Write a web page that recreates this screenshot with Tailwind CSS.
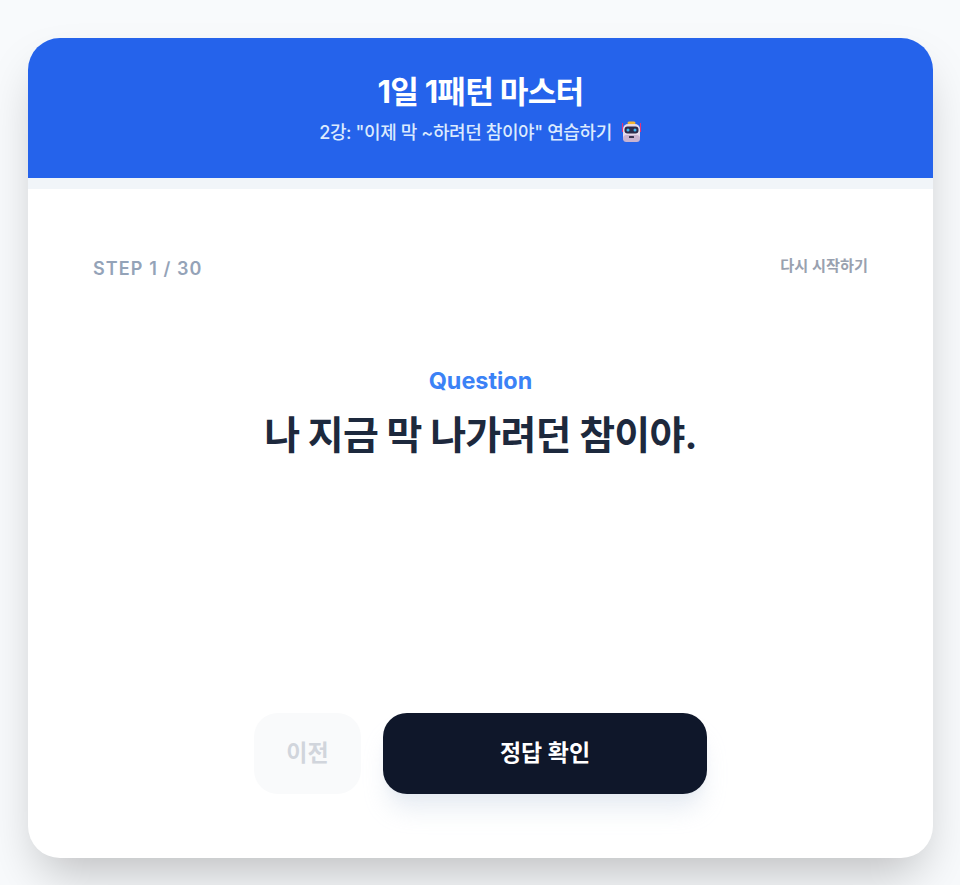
<!DOCTYPE html>
<html lang="ko">
<head>
    <meta charset="UTF-8">
    <meta name="viewport" content="width=device-width, initial-scale=1.0">
    <title>1일 1패턴 마스터</title>
    <script src="https://cdn.jsdelivr.net/npm/@tailwindcss/browser@4"></script>
</head>
<body class="bg-[#f8fafc] h-[885px] overflow-hidden font-['Inter','Noto_Sans_CJK_KR',sans-serif]">
    <div class="pt-[38px] pl-[28px]">
        <!-- Card -->
        <div class="w-[905px] h-[820px] bg-white rounded-[32px] shadow-2xl overflow-hidden flex flex-col">
            <!-- Header -->
            <header class="h-[140px] bg-[#2563eb] text-center pt-[32px]">
                <h1 class="text-[31.2px] leading-[44px] font-bold text-white tracking-tight">1일 1패턴 마스터</h1>
                <p class="text-[18px] leading-[28px] mt-[5px] font-medium text-[#dbeafe] tracking-[-0.4px] flex justify-center items-center gap-[9px]">
                    <span>2강: "이제 막 ~하려던 참이야" 연습하기</span>
                    <!-- robot emoji -->
                    <svg class="w-[21px] h-[22px] -mt-[2px]" viewBox="0 0 21 22">
                        <path d="M1.5 2v9M19.5 2v9" stroke="#e0357a" stroke-width="1.1"/>
                        <rect x="6.5" y="0.5" width="8" height="3" rx="1.5" fill="#f2b632"/>
                        <rect x="2" y="3" width="17" height="18" rx="5" fill="#e6daea"/>
                        <rect x="2" y="14" width="17" height="7" rx="3.5" fill="#c9b3d0"/>
                        <rect x="3.5" y="5.5" width="14" height="7" rx="3" fill="#2b2a4a"/>
                        <circle cx="7" cy="9" r="1.5" fill="#3fb8f0"/>
                        <circle cx="14" cy="9" r="1.5" fill="#3fb8f0"/>
                        <rect x="8" y="15" width="5" height="2" rx="0.5" fill="#3a3350"/>
                    </svg>
                </p>
            </header>
            <!-- Progress track -->
            <div class="h-[11px] bg-[#f1f5f9]"></div>
            <!-- Body -->
            <main class="flex-1 px-[65px] pt-[64px] pb-[64px] flex flex-col">
                <div class="flex justify-between items-center h-[28px]">
                    <span class="text-[18px] font-semibold tracking-[1.1px] text-[#94a3b8] mt-[2px]">STEP 1 / 30</span>
                    <button class="text-[15.2px] font-semibold text-gray-400 -mt-[1px]">다시 시작하기</button>
                </div>
                <div class="flex-1 text-center pt-[84px]">
                    <p class="text-[23.4px] leading-[32px] font-bold text-[#3b82f6]">Question</p>
                    <h2 class="text-[39px] leading-[56px] font-bold text-slate-800 tracking-[-0.75px] mt-[10px]">나 지금 막 나가려던 참이야.</h2>
                </div>
                <div class="flex justify-center gap-[22px]">
                    <button class="w-[107px] h-[81px] rounded-[24px] bg-gray-50 text-[23px] font-bold text-gray-300">이전</button>
                    <button class="w-[324px] h-[81px] rounded-[24px] bg-[#0f172a] text-[23px] font-bold text-white shadow-xl shadow-slate-200/80">정답 확인</button>
                </div>
            </main>
        </div>
    </div>
</body>
</html>
